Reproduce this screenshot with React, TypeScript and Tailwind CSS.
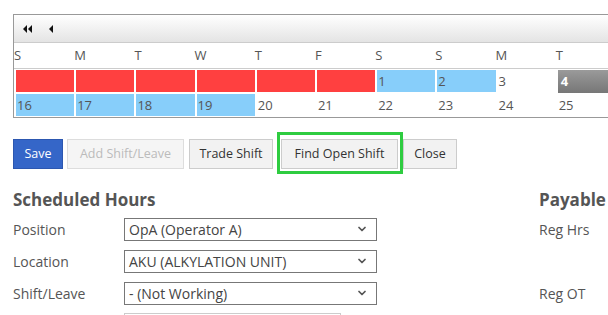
import { ChevronDown } from 'lucide-react'

type Cell = { label?: string; kind: 'red' | 'blue' | 'none' | 'gray' }

const dias = ['S', 'M', 'T', 'W', 'T', 'F', 'S', 'S', 'M', 'T']

const linha1: Cell[] = [
  { kind: 'red' },
  { kind: 'red' },
  { kind: 'red' },
  { kind: 'red' },
  { kind: 'red' },
  { kind: 'red' },
  { label: '1', kind: 'blue' },
  { label: '2', kind: 'blue' },
  { label: '3', kind: 'none' },
  { label: '4', kind: 'gray' },
]

const linha2: Cell[] = [
  { label: '16', kind: 'blue' },
  { label: '17', kind: 'blue' },
  { label: '18', kind: 'blue' },
  { label: '19', kind: 'blue' },
  { label: '20', kind: 'none' },
  { label: '21', kind: 'none' },
  { label: '22', kind: 'none' },
  { label: '23', kind: 'none' },
  { label: '24', kind: 'none' },
  { label: '25', kind: 'none' },
]

function CelulaDia({ cell }: { cell: Cell }) {
  if (cell.kind === 'red') return <div className="h-[22px] bg-[#ff4040]" />
  if (cell.kind === 'blue')
    return (
      <div className="h-[22px] bg-[#87cefa] pl-px text-[13px] leading-[22px] text-[#555]">
        {cell.label}
      </div>
    )
  if (cell.kind === 'gray')
    return (
      <div className="h-[23px] bg-gradient-to-b from-[#9a9a9a] to-[#777] pl-[3px] text-[13px] leading-[23px] font-bold text-white">
        {cell.label}
      </div>
    )
  return (
    <div className="h-[22px] pl-px text-[13px] leading-[22px] text-[#555]">
      {cell.label}
    </div>
  )
}

function Campo({ label, valor }: { label: string; valor: string }) {
  return (
    <div className="flex h-[32px] items-center">
      <span className="w-[111px] text-[14px] text-[#555]">{label}</span>
      <div className="flex h-[23px] w-[253px] items-center justify-between border border-[#777] pr-[8px] pl-[4px] text-[14px] text-[#444]">
        <span>{valor}</span>
        <ChevronDown size={12} strokeWidth={3.5} className="text-[#555]" />
      </div>
    </div>
  )
}

export default function App() {
  return (
    <div className="h-[315px] w-[608px] overflow-hidden bg-white pt-[14px] pl-[13px] font-['Open_Sans',sans-serif]">
      {/* Calendario */}
      <div className="w-[680px] border-y border-l border-[#999]">
        <div className="flex h-[28px] items-center gap-[16px] border-b border-[#ccc] bg-gradient-to-b from-white to-[#e4e4e4] pl-[9px]">
          <svg width="10" height="8" viewBox="0 0 10 8">
            <path d="M4 0 L0 4 L4 8 Z M9 0 L5 4 L9 8 Z" fill="#111" />
          </svg>
          <svg width="5" height="8" viewBox="0 0 5 8">
            <path d="M4 0 L0 4 L4 8 Z" fill="#111" />
          </svg>
        </div>

        <div className="grid h-[26px] grid-cols-[repeat(10,60.2px)] items-center border-b border-[#ccc] text-[13px] text-[#555]">
          {dias.map((d, i) => (
            <span key={i}>{d}</span>
          ))}
        </div>

        <div className="grid grid-cols-[repeat(9,58.2px)_1fr] gap-x-[2px] gap-y-[1px] pt-px pl-[2px]">
          {linha1.map((c, i) => (
            <CelulaDia key={'a' + i} cell={c} />
          ))}
          {linha2.map((c, i) => (
            <CelulaDia key={'b' + i} cell={c} />
          ))}
        </div>
        <div className="h-px" />
      </div>

      {/* Botoes */}
      <div className="mt-[21px] flex items-center text-[12.5px]">
        <button className="h-[30px] w-[50px] border border-[#2c57b0] bg-[#3566c8] text-white">
          Save
        </button>
        <button className="ml-[4px] h-[30px] w-[117px] border border-[#ddd] bg-[#f5f5f5] text-[#bbb]">
          Add Shift/Leave
        </button>
        <button className="ml-[5px] h-[30px] w-[84px] border border-[#ccc] bg-[#f2f2f2] text-[#333]">
          Trade Shift
        </button>
        <div className="relative ml-[8px]">
          <button className="h-[30px] w-[117px] border border-[#ccc] bg-[#f2f2f2] text-[#333]">
            Find Open Shift
          </button>
          <span className="pointer-events-none absolute -top-[7px] -right-[5px] -bottom-[5px] -left-[4px] border-[3px] border-[#2ecc40]" />
        </div>
        <button className="ml-[5px] h-[30px] w-[54px] border border-[#ccc] bg-[#f2f2f2] text-[#333]">
          Close
        </button>
      </div>

      {/* Formulario */}
      <div className="mt-[18px] flex">
        <div className="w-[526px]">
          <h2 className="h-[26px] text-[17px] leading-[26px] font-bold text-[#555]">
            Scheduled Hours
          </h2>
          <div>
            <Campo label="Position" valor="OpA (Operator A)" />
            <Campo label="Location" valor="AKU (ALKYLATION UNIT)" />
            <Campo label="Shift/Leave" valor="- (Not Working)" />
            <div className="mt-[4px] ml-[111px] h-[23px] w-[217px] border border-[#ccc]" />
          </div>
        </div>
        <div>
          <h2 className="h-[26px] text-[17px] leading-[26px] font-bold text-[#555]">
            Payable
          </h2>
          <div className="text-[14px] text-[#555]">
            <div className="flex h-[32px] items-center">Reg Hrs</div>
            <div className="h-[32px]" />
            <div className="flex h-[32px] items-center">Reg OT</div>
          </div>
        </div>
      </div>
    </div>
  )
}
